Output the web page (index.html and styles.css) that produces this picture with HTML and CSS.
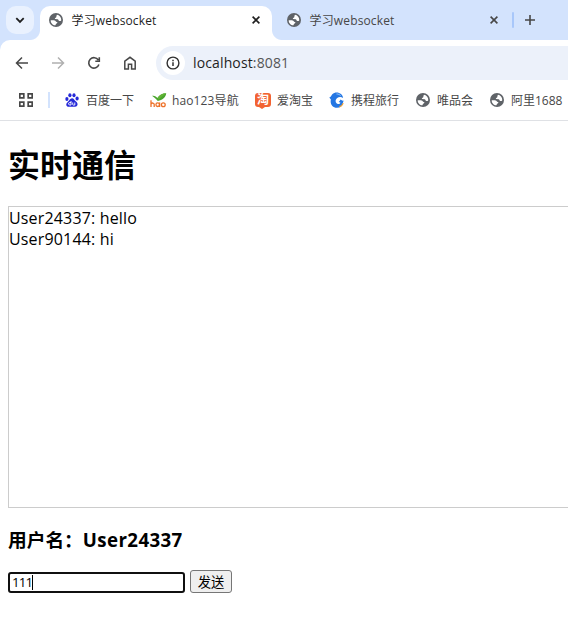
FILE: index.html
```html
<!DOCTYPE html>
<html lang="zh-CN">
<head>
<meta charset="utf-8">
<title>学习websocket</title>
<link rel="stylesheet" href="styles.css">
</head>
<body>
<svg class="defs" width="0" height="0" aria-hidden="true">
  <symbol id="globe" viewBox="0 0 14 14">
    <circle cx="7" cy="7" r="7" fill="#5f6368"/>
    <path d="M8 1.700C10.300 1.900 12.300 4.100 12.300 7.200C11.800 8 11 8.200 10.100 7.900C9.300 7.500 9.500 6.700 8.700 6.300L6 6.100C5.500 5.200 6.300 4.700 7.100 4.400C7.600 3.700 7.200 2.700 8 1.700Z" fill="#fff"/>
    <path d="M1.700 7.200H4.800C6.200 7.300 6.600 8 7.100 8.700L8.400 9.200C8.700 10.200 7.200 10.400 6.900 11L6.500 12.300C3.700 12.200 1.600 10 1.700 7.200Z" fill="#fff"/>
  </symbol>
  <symbol id="close" viewBox="0 0 8 8"><path d="M.6.6l6.800 6.800M7.400.6L.6 7.400" fill="none" stroke="currentColor" stroke-width="1.6"/></symbol>
</svg>
<header class="browser">
  <div class="tabs">
    <button class="search-tabs" aria-label="Search tabs"><svg width="10" height="7" viewBox="0 0 10 7"><path d="M1.300 1.200L5 4.900l3.700-3.700" fill="none" stroke="#1f1f1f" stroke-width="1.800"/></svg></button>
    <div class="tab active"><svg class="globe"><use href="#globe"/></svg><span class="tab-title">学习websocket</span><svg class="close"><use href="#close"/></svg></div>
    <div class="tab"><svg class="globe"><use href="#globe"/></svg><span class="tab-title">学习websocket</span><svg class="close"><use href="#close"/></svg></div>
    <i class="tab-sep"></i>
    <svg class="plus" width="12" height="12" viewBox="0 0 12 12"><path d="M6 1v10M1 6h10" fill="none" stroke="#474747" stroke-width="1.600"/></svg>
  </div>
  <nav class="toolbar">
    <svg class="nav" viewBox="0 0 16 16"><path d="M14 8H3M8 2.500L2.500 8 8 13.500" fill="none" stroke="#474747" stroke-width="1.500"/></svg>
    <svg class="nav" viewBox="0 0 16 16"><path d="M2 8h11M8 2.500L13.500 8 8 13.500" fill="none" stroke="#b0b0b0" stroke-width="1.500"/></svg>
    <svg class="nav" viewBox="0 0 16 16"><path d="M12.900 9.500A5.200 5.200 0 1 1 12.300 5M13.300 2.200v4H9.300" fill="none" stroke="#474747" stroke-width="1.600"/></svg>
    <svg class="nav" viewBox="0 0 16 16"><path d="M2.800 14V6.200L8 2.300l5.200 3.900V14H9.600V9.300H6.400V14z" fill="none" stroke="#474747" stroke-width="1.500"/></svg>
    <div class="address"><span class="info"><svg width="14" height="14" viewBox="0 0 14 14"><circle cx="7" cy="7" r="5.900" fill="none" stroke="#303030" stroke-width="1.400"/><path d="M7 6.300V10M7 3.700v1.500" stroke="#303030" stroke-width="1.500"/></svg></span><span class="url">localhost<span class="port">:8081</span></span></div>
  </nav>
  <div class="bookmarks">
    <svg class="apps" width="14" height="14" viewBox="0 0 14 14"><path d="M.8.8h4v4h-4zM9.200.8h4v4h-4zM.8 9.200h4v4h-4zM9.200 9.200h4v4h-4z" fill="none" stroke="#474747" stroke-width="1.700"/></svg>
    <i class="mark-sep"></i>
    <a class="mark baidu"><svg width="14" height="14" viewBox="0 0 14 14"><g fill="#2529d8"><ellipse cx="1.900" cy="6" rx="1.600" ry="2"/><ellipse cx="4.900" cy="2.200" rx="1.600" ry="2"/><ellipse cx="9" cy="2.200" rx="1.600" ry="2"/><ellipse cx="12.100" cy="5.600" rx="1.600" ry="2"/><path d="M7 5.300c2 0 2.300 2 4 3.300 2.800 2.200 1.500 5.400-1 5.200H3.800C.9 13.800.5 10.500 2.700 9 4.600 7.700 5 5.300 7 5.300z"/></g><path d="M6 8v4H4.900c-1.900 0-1.900-2.500 0-2.500H6M7.700 9.500v1.700c0 1 .5 1 2.100.8V9.500" fill="none" stroke="#fff" stroke-width=".9"/></svg><span>百度一下</span></a>
    <a class="mark hao"><svg width="17" height="15" viewBox="0 0 17 15"><path d="M2 2.800C4.500 2.300 6.200 3.400 7.500 5 9.200 1.800 12.500.3 16.200.2 15.900 4 12.500 7.200 7.800 7.900 6 6 4.400 4.300 2 2.800z" fill="#49a52d"/><path d="M7.500 5C9.200 1.800 12.500.3 16.200.2L8.500 6.500z" fill="#62b436"/><g fill="none" stroke="#ed7128" stroke-width="1.300"><path d="M1 7.300V14M1 11c1-1.500 3.200-1.200 3.200.5V14M9.600 9.500V14M10 9.500"/><circle cx="7.700" cy="11.700" r="1.800"/><circle cx="13.300" cy="11.700" r="1.900"/></g></svg><span>hao123导航</span></a>
    <a class="mark taobao"><span class="tao">淘</span><span>爱淘宝</span></a>
    <a class="mark ctrip"><svg width="16" height="16" viewBox="0 0 16 16"><path d="M3.300 2.300C5.500-.1 9.500-.2 12 2c1.400 1.200 2 2.500 2.100 4C12.300 4.700 10 4.600 8.200 5.900 5.800 7.800 6.200 11.200 8.800 12c1.300.3 2.100-.2 2.600-1.500L9.700 10c.9-.7 1.500-1.600 1.900-2.500.9.800 2 1.300 3.400 1.300-.7.500-1 1.100-1 1.900-.5 3-2.700 5-6.100 5-4.400 0-7.100-3.800-6-8.200L.3 5.600C2 5.200 2.200 3.500 3.300 2.300z" fill="#2577e3"/><path d="M7.500 2c1.800-.1 3.100.6 4.200 1.800" fill="none" stroke="#b5dafe" stroke-width=".8"/><path d="M10.300 15c2-.6 3.400-2 3.800-4" fill="none" stroke="#f5a332" stroke-width="1.100"/></svg><span>携程旅行</span></a>
    <a class="mark vip"><svg class="globe"><use href="#globe"/></svg><span>唯品会</span></a>
    <a class="mark ali"><svg class="globe"><use href="#globe"/></svg><span>阿里1688</span></a>
  </div>
</header>
<main>
  <h1>实时通信</h1>
  <section class="messages"><div>User24337: hello</div><div>User90144: hi</div></section>
  <h3>用户名：<span>User24337</span></h3>
  <div class="compose"><div class="input" role="textbox">111<i class="caret"></i></div><button class="send">发送</button></div>
</main>
</body>
</html>
```
FILE: styles.css
```css
* { box-sizing: border-box; }
body { margin: 0; width: 568px; height: 644px; overflow: hidden; background: #fff; color: #000; font-family: "Open Sans", "Noto Sans CJK SC", sans-serif; }
svg { display: block; flex: none; }
.defs { position: absolute; }
button { font: inherit; padding: 0; }
.browser { height: 121px; border-bottom: 1px solid #dfe1e5; white-space: nowrap; }
.tabs { height: 50px; margin-bottom: -10px; padding: 6px 0 10px 6px; display: flex; background: #d3e3fd; }
.search-tabs { width: 28px; height: 28px; border: 0; border-radius: 10px; background: #e9f1fe; display: flex; align-items: center; justify-content: center; margin-right: 6px; }
.tab { position: relative; width: 232px; height: 34px; display: flex; align-items: center; padding: 0 12px 6px 9px; color: #474747; }
.tab + .tab { padding-left: 15px; padding-right: 6px; }
.active { background: #fff; border-radius: 10px 10px 0 0; color: #1f1f1f; }
.active::before, .active::after { content: ""; position: absolute; bottom: 0; width: 10px; height: 10px; }
.active::before { left: -10px; background: radial-gradient(circle at 0 0, transparent 9.5px, #fff 10.5px); }
.active::after { right: -10px; background: radial-gradient(circle at 100% 0, transparent 9.5px, #fff 10.5px); }
.globe { width: 14px; height: 14px; }
.tab-title { margin-left: 8.5px; font-size: 12px; line-height: 20px; letter-spacing: .15px; padding-top: 1px; }
.close { width: 8px; height: 8px; margin-left: auto; }
.tab-sep { width: 2px; height: 16px; margin: 6px 10px 0 8px; background: #a8c7fa; border-radius: 1px; }
.plus { margin-top: 8px; }
.toolbar { position: relative; height: 40px; padding: 6px 0 0 14px; display: flex; background: #fff; border-radius: 10px 0 0; }
.nav { width: 16px; height: 16px; margin: 9px 20px 0 0; }
.address { flex: 1; margin-left: -2px; height: 34px; padding-left: 5px; display: flex; align-items: center; background: #ecf1fa; border-radius: 17px 0 0 17px; }
.info { width: 24px; height: 24px; border-radius: 50%; background: #fff; display: flex; align-items: center; justify-content: center; }
.url { margin-left: 8px; font-size: 14px; line-height: 22px; color: #1f1f1f; letter-spacing: .13px; }
.port { color: #555; }
.bookmarks { height: 40px; display: flex; align-items: center; font-size: 12px; color: #474747; }
.apps { margin-left: 19px; }
.mark-sep { width: 2px; height: 16px; margin-left: 15px; background: #d3e3fd; }
.mark { display: flex; align-items: center; height: 20px; flex: none; }
.mark span { line-height: 20px; padding-top: 1px; }
.baidu { margin-left: 15px; width: 85px; gap: 7px; }
.hao { width: 105px; gap: 5px; letter-spacing: .12px; }
.taobao { width: 74px; gap: 6px; }
.ctrip { width: 87px; gap: 6px; }
.vip { width: 74px; gap: 7px; }
.ali { gap: 7px; }
.mark .tao { position: relative; width: 16px; height: 14px; margin-top: -1px; padding: 0; line-height: 13px; font-size: 12px; font-weight: bold; text-align: center; color: #fff; background: #f26332; border-radius: 3px; }
.tao::after { content: ""; position: absolute; left: 4px; top: 14px; border: solid transparent; border-width: 2px 3px 0; border-top-color: #f26332; }
main { padding: 0 0 0 8px; }
h1 { margin: 21px 0 19px; font-size: 32px; line-height: 45px; font-weight: 700; }
.messages { height: 302px; border: 1px solid #ccc; border-right: 0; font-size: 16px; line-height: 21px; padding-top: 1px; letter-spacing: .16px; }
h3 { margin: 19px 0 18px; font-size: 18.72px; line-height: 25px; font-weight: 700; }
h3 span { letter-spacing: .38px; }
.compose { display: flex; align-items: flex-end; gap: 5px; }
.input { width: 177px; height: 21px; border: 2px solid #101010; border-radius: 3px; font-size: 13.333px; line-height: 17px; padding-left: 2px; display: flex; letter-spacing: -.85px; }
.caret { width: 1px; height: 15px; margin-top: 1px; background: #000; }
.send { width: 42px; height: 23px; border: 1px solid #767676; border-radius: 3px; background: #efefef; font-size: 13.333px; line-height: 20px; color: #000; }
```
